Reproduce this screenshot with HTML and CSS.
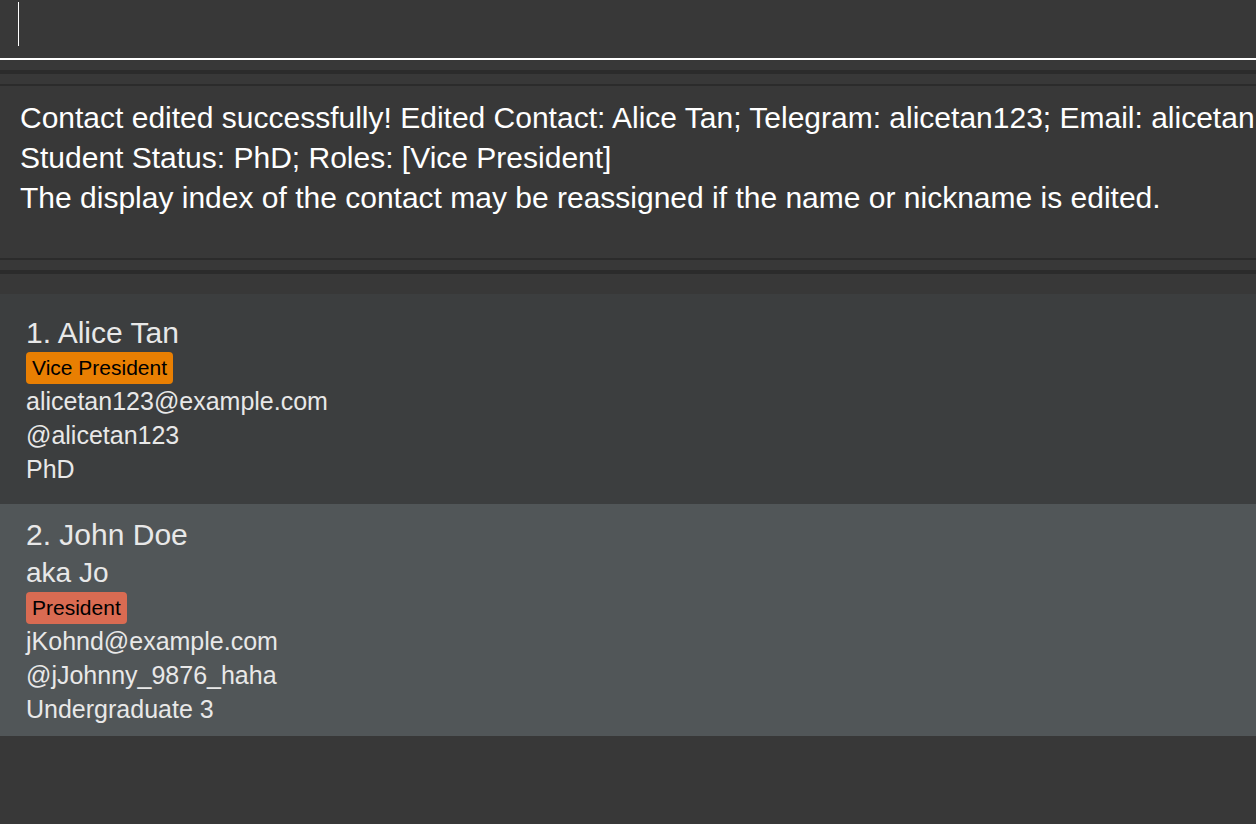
FILE: index.html
```html
<!DOCTYPE html>
<html lang="en">
<head>
<meta charset="utf-8">
<title>Contacts</title>
<link rel="stylesheet" href="styles.css">
</head>
<body>
<main class="window">
  <form class="command">
    <input class="command-input" type="text" aria-label="Command" autocomplete="off">
    <span class="caret"></span>
  </form>
  <section class="result">
    <textarea class="result-display" aria-label="Result" rows="4" wrap="off" readonly>Contact edited successfully! Edited Contact: Alice Tan; Telegram: alicetan123; Email: alicetan
Student Status: PhD; Roles: [Vice President]
The display index of the contact may be reassigned if the name or nickname is edited.</textarea>
  </section>
  <ul class="contacts">
    <li class="card">
      <h2 class="name">1. Alice Tan</h2>
      <span class="tag tag-vice">Vice President</span>
      <p class="detail">alicetan123@example.com</p>
      <p class="detail">@alicetan123</p>
      <p class="detail">PhD</p>
    </li>
    <li class="card card-alt">
      <h2 class="name">2. John Doe</h2>
      <p class="nickname">aka Jo</p>
      <span class="tag tag-president">President</span>
      <p class="detail">jKohnd@example.com</p>
      <p class="detail">@jJohnny_9876_haha</p>
      <p class="detail">Undergraduate 3</p>
    </li>
  </ul>
</main>
</body>
</html>
```
FILE: styles.css
```css
* {
  box-sizing: border-box;
}

body {
  margin: 0;
  background: #383838;
  color: #fff;
  font-family: "Liberation Sans", Arial, sans-serif;
  font-weight: 400;
}

.window {
  min-height: 100vh;
  overflow: hidden;
}

.command {
  position: relative;
}

.command-input {
  display: block;
  width: 100%;
  height: 60px;
  padding: 0 18px;
  border: 0;
  border-bottom: 2px solid #fff;
  outline: 0;
  background: transparent;
  color: #fff;
  font: inherit;
  font-size: 30px;
}

.caret {
  position: absolute;
  top: 2px;
  left: 18px;
  width: 1px;
  height: 44px;
  background: #fff;
}

.result {
  margin-top: 10px;
  padding: 10px 0;
  border: solid #2b2b2b;
  border-width: 4px 0;
}

.result-display {
  display: block;
  width: 100%;
  height: 176px;
  padding: 12px 0 0 20px;
  border: solid #2b2b2b;
  border-width: 2px 0;
  outline: 0;
  resize: none;
  overflow: hidden;
  background: transparent;
  color: #fff;
  font: inherit;
  font-size: 30px;
  line-height: 40px;
}

.contacts {
  margin: 20px 0 0;
  padding: 0;
  list-style: none;
}

.card {
  display: flex;
  flex-direction: column;
  justify-content: center;
  align-items: flex-start;
  min-height: 210px;
  padding: 12px 26px 10px;
  background: #3c3e3f;
  color: #e8e8e8;
}

.card-alt {
  background: #515658;
}

.name,
.nickname {
  margin: 0;
  font-size: 30px;
  font-weight: 400;
  line-height: 38px;
}

.nickname {
  font-size: 28px;
}

.tag {
  padding: 0 6px;
  border-radius: 4px;
  color: #000;
  font-size: 21px;
  line-height: 32px;
}

.tag-vice {
  background: #e97f02;
}

.tag-president {
  background: #d96b52;
}

.detail {
  margin: 0;
  font-size: 25px;
  line-height: 34px;
}
```
